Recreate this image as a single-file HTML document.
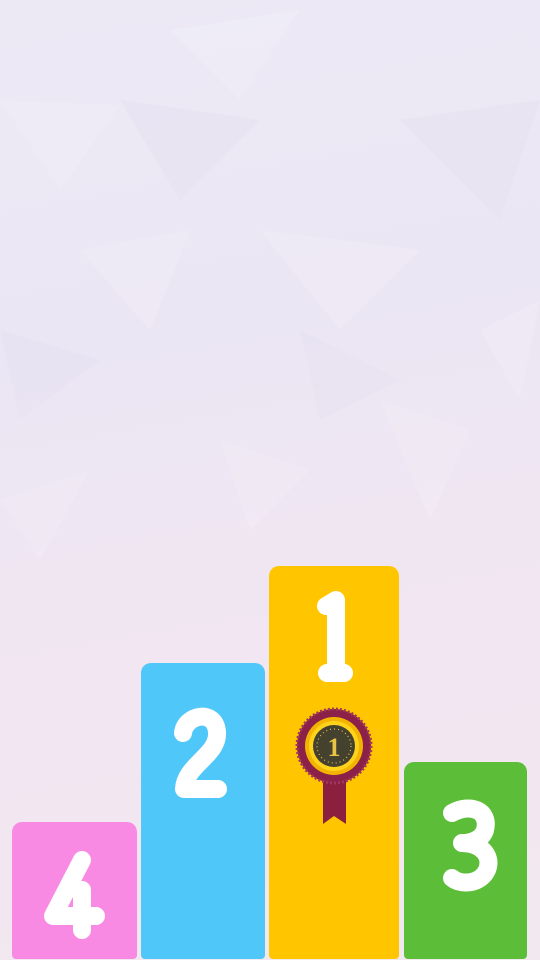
<!DOCTYPE html>
<html><head><style>
html,body{margin:0;padding:0;width:540px;height:960px;overflow:hidden}
body{background:linear-gradient(170deg,#ece9f5 0%,#ebe6f4 35%,#f1e6f1 65%,#f2e8f0 100%);position:relative}
.b{position:absolute;border-radius:10px 10px 4px 4px}
svg{position:absolute;left:0;top:0}
</style></head><body>
<svg width="540" height="960">
<g opacity="0.15" fill="#fff">
<polygon points="0,100 120,105 60,190"/>
<polygon points="170,30 300,10 240,100"/>
<polygon points="260,230 420,250 340,330"/>
<polygon points="480,330 540,300 520,400"/>
<polygon points="80,250 190,230 150,330"/>
<polygon points="0,500 90,470 40,560"/>
<polygon points="220,440 310,470 250,530"/>
<polygon points="380,400 470,430 430,520"/>
</g>
<g opacity="0.12" fill="#d9d0ea">
<polygon points="120,100 260,120 180,200"/>
<polygon points="400,120 540,100 500,220"/>
<polygon points="0,330 100,360 20,420"/>
<polygon points="300,330 400,380 320,420"/>
</g>
</svg>
<div class="b" style="left:12px;top:822px;width:125px;height:137px;background:#f98ae3"></div>
<div class="b" style="left:141px;top:663px;width:124px;height:296px;background:#50c7f9"></div>
<div class="b" style="left:269px;top:566px;width:130px;height:393px;background:#ffc600"></div>
<div class="b" style="left:404px;top:762px;width:123px;height:197px;background:#5bbd38"></div>
<svg width="540" height="960">
<g fill="none" stroke="#fff" stroke-width="18" stroke-linecap="round" stroke-linejoin="round">
<path d="M326,606 L336,600 L336,672 M327,673 L344,673"/>
<path d="M183,733 C185,715 215,708 217,732 C219,755 185,765 184,789 L218,789"/>
<path d="M82,860 L53,916 L96,916 M82,890 L82,930"/>
<path d="M452,813 C470,803 490,810 485,830 C482,840 470,843 462,843 C480,843 493,855 487,870 C480,885 460,885 452,878"/>
</g>
<g>
<rect x="323" y="778" width="23" height="46" fill="#8b1f3e"/>
<polygon points="323,824 334,816 346,824 346,830 323,830" fill="#ffc600"/>
<circle cx="334" cy="746" r="37" fill="#8b2048" stroke="#a0385c" stroke-width="3" stroke-dasharray="2 2"/>
<circle cx="334" cy="746" r="29" fill="#f2b400"/>
<circle cx="334" cy="746" r="25" fill="#ffd21c"/>
<circle cx="334" cy="746" r="21" fill="#45412f"/>
<circle cx="334" cy="746" r="17" fill="none" stroke="#e6c24a" stroke-width="1.2" stroke-dasharray="1 3"/>
<text x="334" y="756" text-anchor="middle" font-family="Liberation Serif,serif" font-size="26" font-weight="bold" fill="#e9c344">1</text>
</g>
</svg>
</body></html>
